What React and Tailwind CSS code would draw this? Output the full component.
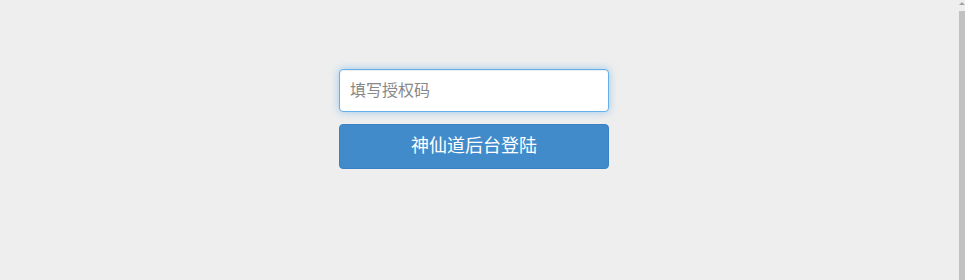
export default function App() {
  return (
    <div className="flex h-[280px] w-full overflow-hidden bg-[#eeeeee] font-['Liberation_Sans','Noto_Sans_CJK_SC',sans-serif]">
      <div className="flex flex-1 justify-center pr-[11px] pt-[69px]">
        <div className="flex w-[270px] flex-col gap-[12px]">
          <input
            autoFocus
            type="text"
            placeholder="填写授权码"
            className="h-[43px] w-full rounded-[4px] border border-[#66afe9] bg-white px-[10px] text-[16px] text-[#555] outline-none shadow-[inset_0_1px_1px_rgba(0,0,0,0.075),0_0_8px_rgba(102,175,233,0.6)] placeholder:text-[#888]"
          />
          <button className="h-[45px] w-full rounded-[4px] border border-[#3a80c4] bg-[#428bca] text-[18px] text-white">
            神仙道后台登陆
          </button>
        </div>
      </div>
      <div className="flex w-[6px] flex-col">
        <div className="flex h-[11px] items-start justify-center pt-[2px]">
          <div className="h-0 w-0 border-x-[3px] border-b-[3px] border-x-transparent border-b-[#a3a3a3]" />
        </div>
        <div className="flex-1 bg-[#c1c1c1]" />
      </div>
    </div>
  );
}
